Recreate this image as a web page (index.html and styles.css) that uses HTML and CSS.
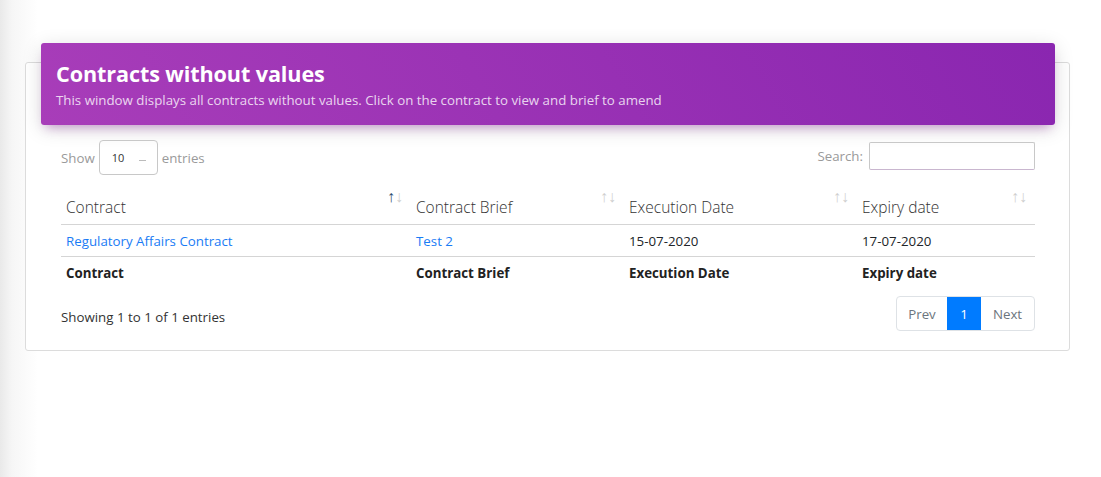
FILE: index.html
```html
<!DOCTYPE html>
<html>
<head>
<meta charset="utf-8">
<link rel="stylesheet" href="styles.css">
</head>
<body>
<div class="page">
  <div class="card">
    <div class="card-header">
      <h4 class="title">Contracts without values</h4>
      <p class="subtitle">This window displays all contracts without values. Click on the contract to view and brief to amend</p>
    </div>
    <div class="card-body">
      <div class="controls">
        <label class="length">Show
          <span class="select"><span class="sel-val">10</span><span class="sel-arrow"></span></span>
          entries</label>
        <label class="search">Search: <span class="search-input"></span></label>
      </div>
      <table class="data">
        <colgroup>
          <col class="c1"><col class="c2"><col class="c3"><col class="c4">
        </colgroup>
        <thead>
          <tr>
            <th>Contract<span class="sort"><span class="up active">↑</span><span class="down">↓</span></span></th>
            <th>Contract Brief<span class="sort"><span class="up">↑</span><span class="down">↓</span></span></th>
            <th>Execution Date<span class="sort"><span class="up">↑</span><span class="down">↓</span></span></th>
            <th>Expiry date<span class="sort"><span class="up">↑</span><span class="down">↓</span></span></th>
          </tr>
        </thead>
        <tbody>
          <tr>
            <td><a href="#">Regulatory Affairs Contract</a></td>
            <td><a href="#">Test 2</a></td>
            <td>15-07-2020</td>
            <td>17-07-2020</td>
          </tr>
        </tbody>
        <tfoot>
          <tr>
            <th>Contract</th>
            <th>Contract Brief</th>
            <th>Execution Date</th>
            <th>Expiry date</th>
          </tr>
        </tfoot>
      </table>
      <div class="bottom">
        <div class="info">Showing 1 to 1 of 1 entries</div>
        <ul class="pagination">
          <li class="pg">Prev</li>
          <li class="pg active">1</li>
          <li class="pg">Next</li>
        </ul>
      </div>
    </div>
  </div>
</div>
</body>
</html>
```
FILE: styles.css
```css
html, body {
  margin: 0;
  padding: 0;
}
body {
  width: 1101px;
  height: 477px;
  background: linear-gradient(90deg, #e9e9e9 0px, #f6f6f6 12px, #ffffff 38px);
  font-family: "Open Sans", "Noto Sans", sans-serif;
  color: #212529;
  overflow: hidden;
}
.page {
  padding: 62px 0 0 25px;
}
.card {
  width: 1043px;
  border: 1px solid #dcdcdc;
  border-radius: 3px;
  background: #fff;
}
.card-header {
  margin: -20px 14px 0 15px;
  height: 82px;
  box-sizing: border-box;
  padding: 16px 15px 0 15px;
  border-radius: 3px;
  background: linear-gradient(60deg, #a83db9, #8a26b0);
  box-shadow: 0 4px 20px 0 rgba(0,0,0,.14), 0 7px 10px -5px rgba(156,39,176,.4);
  color: #fff;
}
.title {
  margin: 0;
  font-size: 21.6px;
  font-weight: 700;
  line-height: 30px;
  letter-spacing: -0.1px;
}
.subtitle {
  margin: 2px 0 0 0;
  font-size: 13.3px;
  line-height: 18px;
  color: rgba(255,255,255,.8);
}
.card-body {
  padding: 15px 34px 19px 35px;
}
.controls {
  display: flex;
  justify-content: space-between;
  align-items: center;
  font-size: 13.3px;
  color: #9a9a9a;
}
.length {
  display: flex;
  align-items: center;
  gap: 4px;
}
.select {
  display: inline-flex;
  align-items: center;
  width: 59px;
  height: 35px;
  box-sizing: border-box;
  border: 1px solid #c8c8c8;
  border-radius: 4px;
  padding-left: 12px;
  color: #333;
  font-size: 11px;
}
.sel-arrow {
  display: inline-block;
  width: 7px;
  height: 1px;
  background: #bbb;
  margin: 6px 0 0 15px;
}
.search {
  display: flex;
  align-items: center;
  gap: 6px;
  margin-top: -4px;
}
.search-input {
  display: inline-block;
  width: 166px;
  height: 28px;
  box-sizing: border-box;
  border: 1px solid #c8c8c8;
  border-bottom-color: #c9b6cf;
  border-radius: 2px;
}
.data {
  width: 100%;
  border-collapse: collapse;
  margin-top: 3px;
  table-layout: fixed;
}
.c1 { width: 350px; }
.c2 { width: 213px; }
.c3 { width: 233px; }
.c4 { width: auto; }
.data thead th {
  position: relative;
  height: 40px;
  padding: 0 5px 6px 5px;
  vertical-align: bottom;
  text-align: left;
  font-size: 15.5px;
  font-weight: 300;
  color: #333;
  border-bottom: 1px solid #d5d5d5;
}
.sort {
  position: absolute;
  top: 10px;
  right: 8px;
  font-size: 16px;
  line-height: 16px;
  color: #cfcfcf;
  letter-spacing: 0;
  font-weight: 300;
}
.sort .active {
  color: #2f4d6e;
}
.data tbody td {
  height: 31px;
  padding: 0 5px;
  font-size: 13.3px;
  border-bottom: 1px solid #d5d5d5;
  vertical-align: middle;
}
.data a {
  color: #1a7cf5;
  text-decoration: none;
}
.data tfoot th {
  height: 32px;
  padding: 0 5px;
  text-align: left;
  font-size: 13.3px;
  font-weight: 700;
  color: #222;
}
.bottom {
  display: flex;
  justify-content: space-between;
  align-items: center;
  margin-top: 7px;
}
.info {
  font-size: 13.3px;
  color: #333;
  margin-top: 6px;
}
.pagination {
  display: flex;
  list-style: none;
  margin: 0;
  padding: 0;
  border: 1px solid #dee2e6;
  border-radius: 4px;
  overflow: hidden;
}
.pg {
  height: 33px;
  display: flex;
  align-items: center;
  justify-content: center;
  font-size: 13.3px;
  color: #6c757d;
}
.pg:first-child { width: 50px; }
.pg:last-child { width: 53px; }
.pg.active {
  width: 34px;
  background: #007bff;
  color: #fff;
}
```
